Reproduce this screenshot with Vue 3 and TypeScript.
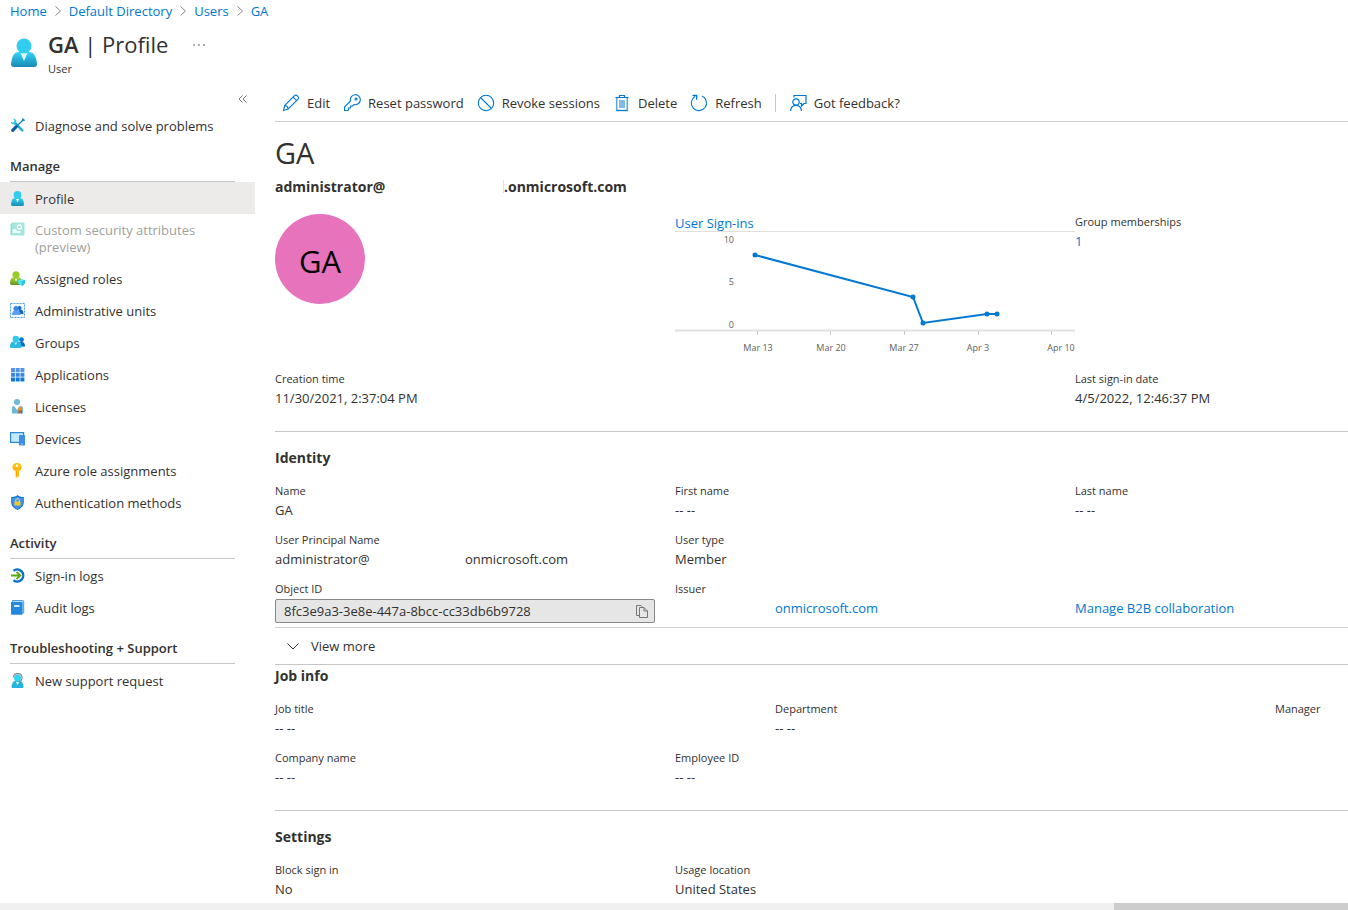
<script setup lang="ts">
interface NavItem {
  label: string
  icon: string
  active?: boolean
  disabled?: boolean
}
interface NavSection {
  title?: string
  items: NavItem[]
}
interface Field {
  label: string
  value: string
}

const crumbs: string[] = ['Home', 'Default Directory', 'Users', 'GA']

const sections: NavSection[] = [
  { items: [{ label: 'Diagnose and solve problems', icon: 'tools' }] },
  {
    title: 'Manage',
    items: [
      { label: 'Profile', icon: 'person', active: true },
      { label: 'Custom security attributes (preview)', icon: 'attributes', disabled: true },
      { label: 'Assigned roles', icon: 'roles' },
      { label: 'Administrative units', icon: 'units' },
      { label: 'Groups', icon: 'groups' },
      { label: 'Applications', icon: 'apps' },
      { label: 'Licenses', icon: 'licenses' },
      { label: 'Devices', icon: 'devices' },
      { label: 'Azure role assignments', icon: 'key' },
      { label: 'Authentication methods', icon: 'shield' },
    ],
  },
  {
    title: 'Activity',
    items: [
      { label: 'Sign-in logs', icon: 'signin' },
      { label: 'Audit logs', icon: 'book' },
    ],
  },
  { title: 'Troubleshooting + Support', items: [{ label: 'New support request', icon: 'support' }] },
]

const commands = [
  { label: 'Edit', icon: 'edit' },
  { label: 'Reset password', icon: 'reset' },
  { label: 'Revoke sessions', icon: 'revoke' },
  { label: 'Delete', icon: 'delete' },
  { label: 'Refresh', icon: 'refresh' },
]

const jobTop: Field[] = [
  { label: 'Job title', value: '-- --' },
  { label: 'Department', value: '-- --' },
  { label: 'Manager', value: '' },
]
const jobBottom: Field[] = [
  { label: 'Company name', value: '-- --' },
  { label: 'Employee ID', value: '-- --' },
]
const settings: Field[] = [
  { label: 'Block sign in', value: 'No' },
  { label: 'Usage location', value: 'United States' },
]

const points = [
  { x: 80, y: 24 },
  { x: 238, y: 66 },
  { x: 248, y: 92 },
  { x: 312, y: 83 },
  { x: 322, y: 83 },
]
const line = points.map((p) => `${p.x},${p.y}`).join(' ')
const xTicks = [
  { x: 82, at: 83, label: 'Mar 13' },
  { x: 155, at: 156, label: 'Mar 20' },
  { x: 229, at: 229, label: 'Mar 27' },
  { x: 303, at: 303, label: 'Apr 3' },
  { x: 376, at: 386, label: 'Apr 10' },
]
const yTicks = [
  { y: 12, label: '10' },
  { y: 54, label: '5' },
  { y: 97, label: '0' },
]
</script>

<template>
  <div class="page">
    <svg class="defs" width="0" height="0" aria-hidden="true">
      <defs>
        <linearGradient id="cyan" x1="0" y1="0" x2="0" y2="1">
          <stop offset="0" stop-color="#32d4f5" />
          <stop offset="1" stop-color="#198ab3" />
        </linearGradient>
        <linearGradient id="green" x1="0" y1="0" x2="0" y2="1">
          <stop offset="0" stop-color="#a4d627" />
          <stop offset="1" stop-color="#5e9624" />
        </linearGradient>
      </defs>
    </svg>

    <nav class="crumbs" aria-label="Breadcrumb">
      <template v-for="(c, i) in crumbs" :key="c">
        <svg v-if="i" class="sep" viewBox="0 0 6 10"><path d="M.5.5 5.5 5 .5 9.5" fill="none" stroke="#8a8886" /></svg>
        <a href="#">{{ c }}</a>
      </template>
    </nav>

    <header class="head">
      <svg class="head-icon" viewBox="0 0 26 30">
        <path d="M0 26C1 18 3 14 8 14h10c5 0 7 4 8 12 0 2-1 3-3 3H3c-2 0-3-1-3-3z" fill="url(#cyan)" />
        <path d="M9.500 15h7L13 23z" fill="#fff" opacity=".85" />
        <circle cx="13" cy="8" r="7.500" fill="#32cdef" />
      </svg>
      <div>
        <h1><b>GA</b> | Profile</h1>
        <p>User</p>
      </div>
      <button class="more" type="button" aria-label="More">
        <svg viewBox="0 0 12 2"><path d="M0 1h2M5 1h2M10 1h2" stroke="#605e5c" stroke-width="1" /></svg>
      </button>
    </header>

    <div class="body">
      <aside class="side">
        <button class="collapse" type="button" aria-label="Collapse menu">
          <svg viewBox="0 0 9 8"><path d="M4.500.5 1 4l3.500 3.500M8.500.5 5 4l3.500 3.500" fill="none" stroke="#797775" /></svg>
        </button>
        <section v-for="(s, si) in sections" :key="si">
          <h2 v-if="s.title">{{ s.title }}</h2>
          <a
            v-for="it in s.items"
            :key="it.label"
            href="#"
            class="nav"
            :class="{ active: it.active, disabled: it.disabled }"
          >
            <svg class="ico" viewBox="0 0 15 15">
              <template v-if="it.icon === 'tools'">
                <path d="m5 5 7.300 7.300" stroke="#32a9d4" stroke-width="2.600" stroke-linecap="round" />
                <path d="M3.200.8c2-.3 3.700 1.500 3.200 3.500L4.500 6.500C2.500 7 .7 5.500.9 3.500l2 1.300L4.600 3z" fill="#32c8ec" />
                <path d="m7.500 7.500 4.800-4.800.5-1.500 1.200 1-1.500.8" fill="none" stroke="#1988c0" stroke-width="1.400" />
                <path d="M2.700 12.300 6.300 8.700" stroke="#0a5fa8" stroke-width="3.200" stroke-linecap="round" />
              </template>
              <template v-else-if="it.icon === 'person'">
                <path d="M1 13c.4-4 1.500-6 4-6h5c2.500 0 3.600 2 4 6 0 1.200-.6 2-1.600 2H2.600C1.600 15 1 14.200 1 13z" fill="url(#cyan)" />
                <path d="M6 8h3l-1.500 3.500z" fill="#fff" />
                <circle cx="7.500" cy="4" r="3.900" fill="#32cdef" />
              </template>
              <template v-else-if="it.icon === 'attributes'">
                <rect x="1.500" y=".5" width="13" height="13" rx="1" fill="#69d5c9" />
                <path d="M.5 2.500 2 1v12H.5z" fill="#44c2b2" />
                <circle cx="9.500" cy="5" r="2" fill="none" stroke="#fff" stroke-width="1.300" />
                <path d="M2.500 7h4v2h4v2h-8z" fill="#e3fbf7" />
              </template>
              <template v-else-if="it.icon === 'roles'">
                <path d="M0 12c.3-4 1.400-5.500 3.500-5.500h5C10.600 6.500 11.700 8 12 12c0 1.200-.6 2-1.600 2H1.600C.6 14 0 13.200 0 12z" fill="url(#green)" />
                <path d="M4.700 7.500h2.600L6 11z" fill="#fff" />
                <circle cx="6" cy="3.800" r="3.600" fill="#98cc27" />
                <path d="m8 9.500 3.500-1.500 3.500 1v3.500L12 15l-3.500-2z" fill="#50e6ff" />
                <path d="m11.500 10.500 3.500-1.500v3.500L12 15z" fill="#32bedd" />
              </template>
              <template v-else-if="it.icon === 'units'">
                <rect x=".5" y=".5" width="14" height="14" fill="#f3f9ff" stroke="#4aa0ea" stroke-dasharray="2 1" />
                <path d="M7.500 11c0-3 1-4.500 3-4.500s3 1.500 3 4.500z" fill="#1267c4" />
                <circle cx="9.500" cy="5" r="2" fill="#1267c4" />
                <path d="M2 12c0-3 1-4.500 3-4.500h2.500c2 0 3 1.500 3 4.500z" fill="#5ea0ef" />
                <circle cx="6" cy="5.500" r="2.500" fill="#3d86dd" />
              </template>
              <template v-else-if="it.icon === 'groups'">
                <path d="M8 11.500c0-3 1-4.500 3-4.500h1c2 0 3 1.500 3 4.500z" fill="#0067c5" />
                <circle cx="11.500" cy="4.700" r="2.400" fill="#0078d4" />
                <path d="M0 11.500C.2 8 1.300 6.500 3.500 6.500H8c2.200 0 3.300 1.500 3.500 5 0 1-.5 1.500-1.500 1.500H1.500C.5 13 0 12.500 0 11.500z" fill="#2bbbe0" />
                <path d="M4.500 7.500H7L5.800 10z" fill="#fff" />
                <circle cx="5.800" cy="4" r="3.200" fill="#30c9ec" />
              </template>
              <template v-else-if="it.icon === 'apps'">
                <path d="M1 1h4v4H1zM5.700 1h4v4h-4zM10.400 1h4v4h-4z" fill="#5795e4" />
                <path d="M1 5.700h4v4H1zM5.700 5.700h4v4h-4zM10.400 5.700h4v4h-4z" fill="#3b8ae0" />
                <path d="M1 10.400h4v4H1zM5.700 10.400h4v4h-4zM10.400 10.400h4v4h-4z" fill="#1279d6" />
              </template>
              <template v-else-if="it.icon === 'licenses'">
                <path d="M2 14.500V9c0-1.500 1-2 2-2l3 4 3-4c2 0 3 .8 3 2.500v5z" fill="#6bb9da" />
                <circle cx="7" cy="3" r="3" fill="#6bb9da" />
                <path d="M8.500 10h3.500v5l-1.700-1.500L8.500 15z" fill="#c8501c" />
                <circle cx="10.200" cy="9.800" r="2" fill="#f78d1e" />
              </template>
              <template v-else-if="it.icon === 'devices'">
                <rect x=".6" y="1.600" width="13" height="9.800" fill="#c5e8fb" stroke="#2b88d8" stroke-width="1.200" />
                <rect x="9" y="4" width="6" height="10.500" rx=".6" fill="#3f8ee6" />
                <path d="M11.300 13h1.400" stroke="#c5e8fb" />
              </template>
              <template v-else-if="it.icon === 'key'">
                <path d="M7 0c3 0 4.700 2 4.700 4.300 0 2-1.200 3.200-2.700 3.900V13l-2 2-1.500-1.500V8.200C3.700 7.500 2.300 6.300 2.300 4.300 2.300 2 4 0 7 0z" fill="#fdbf13" />
                <path d="M6 8h1.200v5.500L6 12.500zM3.500 5h7v1h-7z" fill="#ffa800" />
                <circle cx="7" cy="2.700" r="1.300" fill="#fff" />
              </template>
              <template v-else-if="it.icon === 'shield'">
                <path d="M7.500 0C9 1.500 11 2 13.800 2v5c0 4-3 6.500-6.300 8C4.200 13.500 1.200 11 1.200 7V2C4 2 6 1.500 7.500 0z" fill="#0f77d0" />
                <path d="M7.500 1.500C9 2.500 11 3 12.800 3v4c0 3.500-2.500 5.500-5.300 7-2.800-1.500-5.300-3.500-5.300-7V3C4 3 6 2.500 7.500 1.500z" fill="#4393e6" />
                <path d="M5.800 7V5.500C5.800 3 9.400 3 9.400 5.500V7" fill="none" stroke="#ffe28a" />
                <rect x="4.500" y="6.500" width="6" height="4" rx=".5" fill="#f8c52c" />
              </template>
              <template v-else-if="it.icon === 'signin'">
                <path d="M3.500 2.800A6 6 0 1 1 3.500 12.200" fill="none" stroke="#0c71ce" stroke-width="2.400" />
                <path d="M1 7.500h9M6.500 3.800l3.800 3.700-3.800 3.700" fill="none" stroke="#5aa80f" stroke-width="1.800" />
              </template>
              <template v-else-if="it.icon === 'book'">
                <path d="M2.500.5h10c.8 0 1.200.4 1.200 1v11.500H2z" fill="#b9dcf7" stroke="#2b88d8" stroke-width=".8" />
                <rect x="1" y="2" width="11.500" height="12.700" rx=".6" fill="#2389df" />
                <path d="M4 6h5.500" stroke="#fff" stroke-width="1.600" />
              </template>
              <template v-else>
                <path d="M1.500 13.500C2 10 3 8 5.500 8h4c2.500 0 3.500 2 4 5.500 0 1-.4 1.500-1.400 1.500H2.900c-1 0-1.400-.5-1.400-1.500z" fill="#28b5dc" />
                <path d="M6 9h3l-1.500 3z" fill="#fff" />
                <path d="M3.300 4.500C3.300-.8 12 -.8 12 4.500 12 7 11 8.200 9 8.500" fill="none" stroke="#8a8886" stroke-width="1.200" />
                <circle cx="7.500" cy="5" r="3.500" fill="#32d4f5" />
              </template>
            </svg>
            <span>{{ it.label }}</span>
          </a>
        </section>
      </aside>

      <main class="main">
        <div class="bar">
          <button v-for="c in commands" :key="c.label" type="button">
            <svg viewBox="0 0 18 18" fill="none" stroke="#0078d4" stroke-width="1.100">
              <template v-if="c.icon === 'edit'">
                <path d="m1.500 16.500 1.200-5L12.500 1.700c1.800-1.800 5.200 1.500 3.500 3.500L6.200 15z" />
                <path d="m11 3.200 3.700 3.500M2.700 11.500c2 .2 3.300 1.300 3.500 3.500" />
              </template>
              <template v-else-if="c.icon === 'reset'">
                <path d="M7.500 7A5 5 0 1 1 11 10.500L9.500 12H7.500v2h-2v2L4.800 16.500H1.500V13z" />
                <circle cx="13" cy="5" r="1" />
              </template>
              <template v-else-if="c.icon === 'revoke'">
                <circle cx="9" cy="9" r="7.700" />
                <path d="m3.500 3.500 11 11" />
              </template>
              <template v-else-if="c.icon === 'delete'">
                <rect x="6" y="6" width="6" height="8" fill="#83b9e9" stroke="none" />
                <path d="M3.700 3.500v13h10.600v-13" stroke="#5ea9e4" stroke-width="1.600" />
                <path d="M2.500 3.500h13M6.500 3.500v-2h5v2M3.500 16.500h11" stroke-width="1.200" />
              </template>
              <template v-else>
                <path d="M12 2.100A7.600 7.600 0 1 1 5 2.500" />
                <path d="M2.500 1.500h4.200v4.200" stroke-width="1.300" />
              </template>
            </svg>
            {{ c.label }}
          </button>
          <span class="rule"></span>
          <button type="button">
            <svg viewBox="0 0 18 18" fill="none" stroke="#0078d4" stroke-width="1.200">
              <path d="M5 3.500v-2h12v8h-2L12.500 12V9.500H11" />
              <circle cx="7" cy="8" r="3.200" />
              <path d="M1.500 17c.3-3.500 2.200-5.700 5.500-5.700s5.200 2.200 5.500 5.700" />
            </svg>
            Got feedback?
          </button>
        </div>

        <h2 class="name">GA</h2>
        <p class="mail"><span class="mail-user">administrator@</span><span class="mail-host">.onmicrosoft.com</span></p>

        <div class="grid overview">
          <div class="avatar">GA</div>
          <div class="chart">
            <a href="#">User Sign-ins</a>
            <svg viewBox="0 0 400 124" role="img" aria-label="User sign-ins over time">
              <path d="M0 .5h400" stroke="#e1dfdd" />
              <path d="M0 99.500h400" stroke="#e1e1e1" stroke-width="2" />
              <path v-for="t in xTicks" :key="t.label" :d="`M${t.x + 0.5} 100v4`" stroke="#c8c8c8" />
              <text v-for="t in yTicks" :key="t.label" x="59" :y="t.y" text-anchor="end">{{ t.label }}</text>
              <text v-for="t in xTicks" :key="t.at" :x="t.at" y="120" text-anchor="middle">{{ t.label }}</text>
              <polyline :points="line" fill="none" stroke="#0078d4" stroke-width="2" />
              <circle v-for="p in points" :key="p.x" :cx="p.x" :cy="p.y" r="2.500" fill="#0078d4" />
            </svg>
          </div>
          <div>
            <div class="label">Group memberships</div>
            <a class="value" href="#">1</a>
          </div>
          <div>
            <div class="label">Creation time</div>
            <div class="value">11/30/2021, 2:37:04 PM</div>
          </div>
          <div></div>
          <div>
            <div class="label">Last sign-in date</div>
            <div class="value">4/5/2022, 12:46:37 PM</div>
          </div>
        </div>

        <section class="block">
          <h3>Identity</h3>
          <div class="grid">
            <div><div class="label">Name</div><div class="value">GA</div></div>
            <div><div class="label">First name</div><div class="value">-- --</div></div>
            <div><div class="label">Last name</div><div class="value">-- --</div></div>
            <div>
              <div class="label">User Principal Name</div>
              <div class="value split"><span class="upn-user">administrator@</span><span>onmicrosoft.com</span></div>
            </div>
            <div><div class="label">User type</div><div class="value">Member</div></div>
            <div></div>
            <div>
              <label class="label" for="object-id">Object ID</label>
              <div class="copybox">
                <input id="object-id" type="text" readonly value="8fc3e9a3-3e8e-447a-8bcc-cc33db6b9728" />
                <button type="button" aria-label="Copy to clipboard">
                  <svg viewBox="0 0 12 13" fill="none" stroke="#797775">
                    <path d="M3.500 10.500h-3V.5h4.500l2 2" />
                    <path d="M3.500 2.500h4.500l3.500 3.500v6.500h-8zM8 2.500V6h3.500" />
                  </svg>
                </button>
              </div>
            </div>
            <div><div class="label">Issuer</div><a class="value issuer" href="#">onmicrosoft.com</a></div>
            <div><div class="label"></div><a class="value" href="#">Manage B2B collaboration</a></div>
          </div>
        </section>

        <button class="view-more" type="button">
          <svg viewBox="0 0 12 7"><path d="m.5.5 5.500 5.500L11.500.5" fill="none" stroke="#323130" /></svg>
          View more
        </button>

        <section class="block job">
          <h3>Job info</h3>
          <div class="grid wide">
            <div v-for="f in jobTop" :key="f.label">
              <div class="label">{{ f.label }}</div>
              <div class="value">{{ f.value }}</div>
            </div>
          </div>
          <div class="grid">
            <div v-for="f in jobBottom" :key="f.label">
              <div class="label">{{ f.label }}</div>
              <div class="value">{{ f.value }}</div>
            </div>
          </div>
        </section>

        <section class="block">
          <h3>Settings</h3>
          <div class="grid">
            <div v-for="f in settings" :key="f.label">
              <div class="label">{{ f.label }}</div>
              <div class="value">{{ f.value }}</div>
            </div>
          </div>
        </section>
      </main>
    </div>

    <div class="scroll"><div class="thumb"></div></div>
  </div>
</template>

<style>
body {
  margin: 0;
  background: #fff;
}
</style>

<style scoped>
.page {
  display: flex;
  flex-direction: column;
  min-height: 100vh;
  overflow: hidden;
  color: #323130;
  font: 13px/20px "Open Sans", "Noto Sans", sans-serif;
}
.page * {
  box-sizing: border-box;
}
.defs {
  position: absolute;
}
h1, h2, h3, p {
  margin: 0;
}
a {
  color: #0078d4;
  text-decoration: none;
}
button {
  padding: 0;
  border: 0;
  background: none;
  color: inherit;
  font: inherit;
}
.crumbs {
  display: flex;
  align-items: center;
  gap: 8px;
  height: 22px;
  padding-left: 10px;
}
.sep {
  width: 6px;
  height: 10px;
}
.head {
  display: flex;
  height: 67px;
  padding: 8px 11px;
}
.head-icon {
  width: 26px;
  height: 30px;
  margin: 8px 11px 0 0;
}
h1 {
  font-size: 22px;
  line-height: 28px;
  font-weight: 400;
}
h1 b {
  font-weight: 600;
}
.head p {
  font-size: 11px;
  line-height: 22px;
}
.more {
  align-self: flex-start;
  height: 30px;
  margin-left: 25px;
}
.more svg {
  display: block;
  width: 12px;
  height: 2px;
}
.body {
  display: flex;
  flex: 1;
}
.side {
  flex: none;
  width: 255px;
}
.collapse {
  display: block;
  height: 20px;
  margin: 0 8px 0 auto;
}
.collapse svg {
  display: block;
  width: 9px;
  height: 8px;
}
.side h2 {
  height: 32px;
  margin: 9px 20px 0 10px;
  border-bottom: 1px solid #c8c6c4;
  font-size: 13px;
  line-height: 33px;
  font-weight: 600;
}
.nav {
  display: flex;
  min-height: 32px;
  padding: 9px 20px 6px 10px;
  color: #323130;
  line-height: 17px;
}
.nav .ico {
  flex: none;
  width: 15px;
  height: 15px;
  margin-right: 10px;
}
.nav.active {
  background: #edebe9;
}
.nav.disabled {
  padding: 8px 20px 6px 10px;
  color: #a19f9d;
}
.nav.disabled .ico {
  opacity: 0.6;
}
.main {
  flex: 1;
  min-width: 0;
  padding-left: 20px;
}
.bar {
  display: flex;
  align-items: center;
  height: 33px;
  padding: 0 0 4px 7px;
  border-bottom: 1px solid #d2d0ce;
  gap: 13px;
}
.bar button {
  display: flex;
  align-items: center;
  gap: 7px;
  white-space: nowrap;
}
.bar svg {
  width: 18px;
  height: 18px;
}
.rule {
  width: 1px;
  height: 18px;
  background: #c8c6c4;
}
.name {
  margin-top: 11px;
  font-size: 29px;
  line-height: 40px;
  font-weight: 400;
}
.mail {
  display: flex;
  height: 39px;
  padding-top: 4px;
  font-size: 14px;
  font-weight: 700;
}
.mail-user {
  width: 228px;
}
.mail-host {
  height: 13px;
  margin-top: 3px;
  border-left: 1px solid #e1dfdd;
  line-height: 14px;
}
.grid {
  display: grid;
  grid-template-columns: repeat(3, minmax(400px, 1fr));
  row-gap: 10px;
}
.grid.wide {
  grid-template-columns: repeat(3, minmax(500px, 1fr));
  margin-bottom: 10px;
}
.overview {
  grid-template-rows: 147px auto;
  padding-bottom: 23px;
}
.avatar {
  width: 90px;
  height: 90px;
  margin-top: 2px;
  border-radius: 50%;
  background: #e773bd;
  color: #000;
  font-size: 31px;
  line-height: 94px;
  text-align: center;
}
.chart a {
  display: block;
  height: 19px;
  line-height: 22px;
}
.chart svg {
  display: block;
  width: 100%;
}
.chart text {
  fill: #605e5c;
  font-size: 9px;
}
.label {
  display: block;
  height: 20px;
  font-size: 11px;
  line-height: 20px;
}
.value {
  display: block;
  height: 19px;
  line-height: 19px;
}
.split {
  display: flex;
}
.upn-user {
  width: 190px;
}
.issuer {
  margin-left: 100px;
}
.block {
  padding: 16px 0 4px;
  border-top: 1px solid #c8c6c4;
}
.block.job {
  padding: 1px 0 23px;
}
h3 {
  margin-bottom: 13px;
  font-size: 14px;
  line-height: 20px;
  font-weight: 700;
}
.copybox {
  display: flex;
  align-items: center;
  height: 24px;
  margin-right: 20px;
  padding: 0 6px 0 8px;
  border: 1px solid #8a8886;
  border-radius: 2px;
  background: #e6e6e6;
}
.copybox input {
  flex: 1;
  min-width: 0;
  padding: 0;
  border: 0;
  outline: 0;
  background: none;
  color: inherit;
  font: inherit;
}
.copybox svg {
  display: block;
  width: 12px;
  height: 13px;
}
.view-more {
  display: flex;
  align-items: center;
  gap: 12px;
  width: 100%;
  height: 37px;
  padding-left: 12px;
  border-top: 1px solid #d2d0ce;
}
.view-more svg {
  width: 12px;
  height: 7px;
}
.scroll {
  height: 7px;
  background: #f0f0f0;
}
.thumb {
  width: 234px;
  height: 7px;
  margin-left: auto;
  background: #cdcdcd;
}
</style>
